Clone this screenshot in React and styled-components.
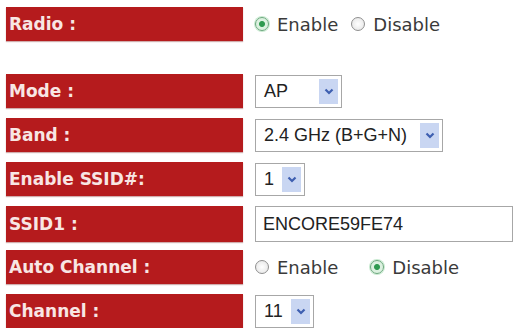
import React from "react";
import styled, { createGlobalStyle } from "styled-components";

const GlobalStyle = createGlobalStyle`
  html, body {
    margin: 0;
    background: #ffffff;
  }
  body {
    font-family: "DejaVu Sans", Verdana, sans-serif;
  }
`;

const rows = [
  { label: "Radio :", type: "radio", value: "enable", gap: 13, spaceAfter: 23 },
  { label: "Mode :", type: "select", value: "AP", width: 87 },
  { label: "Band :", type: "select", value: "2.4 GHz (B+G+N)", width: 188 },
  { label: "Enable SSID#:", type: "select", value: "1", width: 50 },
  { label: "SSID1 :", type: "input", value: "ENCORE59FE74" },
  { label: "Auto Channel :", type: "radio", value: "disable", gap: 32 },
  { label: "Channel :", type: "select", value: "11", width: 59 },
];

function Radio({ checked, children }) {
  return (
    <RadioLabel>
      <RadioCircle $checked={checked} />
      {children}
    </RadioLabel>
  );
}

function Chevron() {
  return (
    <svg width="10" height="7" viewBox="0 0 10 7">
      <path d="M1.5 1.5 L5 5 L8.5 1.5" fill="none" stroke="#3e5fb0" strokeWidth="2.2" />
    </svg>
  );
}

function FakeSelect({ value, width }) {
  return (
    <SelectBox style={{ width }}>
      <SelectText>{value}</SelectText>
      <DropButton>
        <Chevron />
      </DropButton>
    </SelectBox>
  );
}

export default function App() {
  return (
    <>
      <GlobalStyle />
      <Form>
        {rows.map((row) => (
          <Row key={row.label} $spaceAfter={row.spaceAfter}>
            <Label>{row.label}</Label>
            <Field>
              {row.type === "radio" && (
                <RadioGroup $gap={row.gap}>
                  <Radio checked={row.value === "enable"}>Enable</Radio>
                  <Radio checked={row.value === "disable"}>Disable</Radio>
                </RadioGroup>
              )}
              {row.type === "select" && <FakeSelect value={row.value} width={row.width} />}
              {row.type === "input" && <TextInput>{row.value}</TextInput>}
            </Field>
          </Row>
        ))}
      </Form>
    </>
  );
}

const Form = styled.div`
  display: flex;
  flex-direction: column;
  gap: 10px;
  padding: 7px 0 0 6px;
`;

const Row = styled.div`
  display: grid;
  grid-template-columns: 237px 1fr;
  column-gap: 12px;
  height: 34px;
  margin-bottom: ${(p) => p.$spaceAfter || 0}px;
`;

const Label = styled.div`
  background: #b51b1d;
  color: #f8e6e4;
  font-family: "DejaVu Sans", Verdana, sans-serif;
  font-weight: bold;
  font-size: 17px;
  display: flex;
  align-items: center;
  padding-left: 3px;
  box-shadow: 0 1px 1px rgba(120, 20, 20, 0.35);
`;

const Field = styled.div`
  display: flex;
  align-items: center;
`;

const RadioGroup = styled.div`
  display: flex;
  align-items: center;
  gap: ${(p) => p.$gap}px;
`;

const RadioLabel = styled.label`
  display: flex;
  align-items: center;
  gap: 8px;
  font-family: "DejaVu Sans", Verdana, sans-serif;
  font-size: 18px;
  color: #3a3a3a;
`;

const RadioCircle = styled.span`
  box-sizing: border-box;
  width: 14px;
  height: 14px;
  border-radius: 50%;
  border: 1.5px solid ${(p) => (p.$checked ? "#6aa77c" : "#8f8f8f")};
  background: ${(p) =>
    p.$checked
      ? "radial-gradient(circle, #2f9a50 0 2.5px, #dcf1e0 3.5px)"
      : "radial-gradient(circle, #ffffff 0, #e2e2e2 100%)"};
  box-shadow: ${(p) => (p.$checked ? "0 0 0 1px #c9ead1" : "none")};
`;

const SelectBox = styled.div`
  box-sizing: border-box;
  height: 33px;
  border: 1px solid #a7a7a7;
  display: flex;
  align-items: center;
  justify-content: space-between;
  padding: 3px;
  background: #ffffff;
`;

const SelectText = styled.span`
  font-family: "Liberation Sans", Arial, sans-serif;
  font-size: 18px;
  color: #222222;
  padding-left: 5px;
  white-space: nowrap;
`;

const DropButton = styled.span`
  width: 19px;
  height: 100%;
  background: #c9d6f2;
  display: flex;
  align-items: center;
  justify-content: center;
  margin-left: 4px;
`;

const TextInput = styled.div`
  box-sizing: border-box;
  width: 258px;
  height: 36px;
  border: 1px solid #a7a7a7;
  display: flex;
  align-items: center;
  padding-left: 7px;
  font-family: "Liberation Sans", Arial, sans-serif;
  font-size: 18px;
  color: #222222;
`;
